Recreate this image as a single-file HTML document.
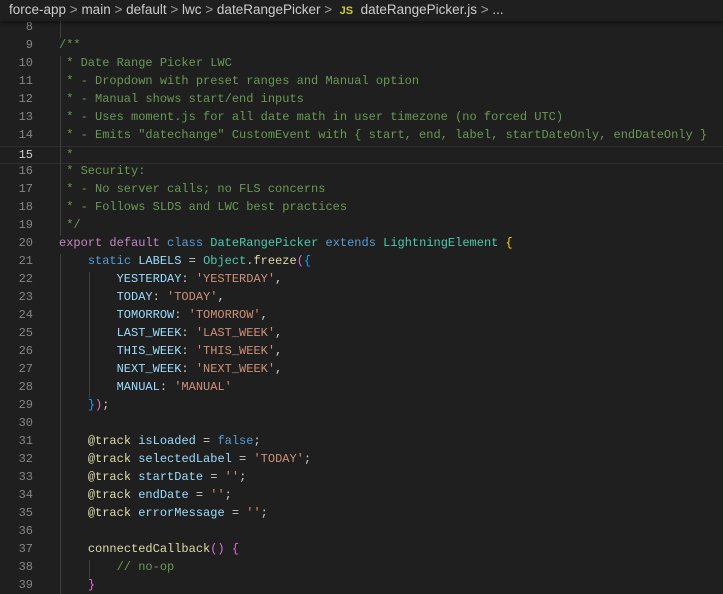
<!DOCTYPE html>
<html><head><meta charset="utf-8"><style>
html,body{margin:0;padding:0;background:#1f1f1f;width:723px;height:594px;overflow:hidden}
#bc{position:absolute;left:0;top:0;width:714px;height:21px;background:#1f1f1f;font:13.5px "Liberation Sans",sans-serif;color:#cccccc;line-height:20px;white-space:pre;padding-left:9px;box-shadow:0 2px 4px rgba(0,0,0,.45);z-index:2}
.sep{color:#a0a0a0}
.js{color:#cbcb41;font-weight:bold;font-size:11px}
#ed{position:absolute;left:0;top:3px;width:723px;height:591px;overflow:hidden}
.row{position:absolute;left:0;width:723px;height:18px;line-height:18px;font:12px "Liberation Mono",monospace;white-space:pre}
.ln{position:absolute;left:0;width:33px;text-align:right;color:#858585}
.cd{position:absolute;left:59px;color:#cccccc}
.cur{border-top:1px solid #303030;border-bottom:1px solid #303030;height:16px;line-height:16px}
.cur .ln{color:#cccccc}
.g{position:absolute;width:1px;background:#404040}
.c{color:#6a9955}.k{color:#c586c0}.b{color:#569cd6}.t{color:#4ec9b0}.v{color:#9cdcfe}.s{color:#ce9178}.f{color:#dcdcaa}.y{color:#ffd700}.p{color:#da70d6}.bl{color:#179fff}.w{color:#cccccc}
</style></head><body>
<div id="bc">force-app <span class="sep">&gt;</span> main <span class="sep">&gt;</span> default <span class="sep">&gt;</span> lwc <span class="sep">&gt;</span> dateRangePicker <span class="sep">&gt;</span>  <span class="js">JS</span>  dateRangePicker.js <span class="sep">&gt;</span> ...</div>
<div id="ed">
<div class="g" style="left:60px;top:17px;height:18px"></div>
<div class="g" style="left:60px;top:53px;height:180px"></div>
<div class="g" style="left:60px;top:251px;height:343px"></div>
<div class="g" style="left:89px;top:269px;height:126px"></div>
<div class="g" style="left:89px;top:557px;height:18px"></div>

<div class="row" style="top:17px"><span class="ln">8</span></div>
<div class="row" style="top:35px"><span class="ln">9</span><span class="cd c">/**</span></div>
<div class="row" style="top:53px"><span class="ln">10</span><span class="cd c"> * Date Range Picker LWC</span></div>
<div class="row" style="top:71px"><span class="ln">11</span><span class="cd c"> * - Dropdown with preset ranges and Manual option</span></div>
<div class="row" style="top:89px"><span class="ln">12</span><span class="cd c"> * - Manual shows start/end inputs</span></div>
<div class="row" style="top:107px"><span class="ln">13</span><span class="cd c"> * - Uses moment.js for all date math in user timezone (no forced UTC)</span></div>
<div class="row" style="top:125px"><span class="ln">14</span><span class="cd c"> * - Emits "datechange" CustomEvent with { start, end, label, startDateOnly, endDateOnly }</span></div>
<div class="row cur" style="top:143px"><span class="ln">15</span><span class="cd c"> *</span></div>
<div class="row" style="top:161px"><span class="ln">16</span><span class="cd c"> * Security:</span></div>
<div class="row" style="top:179px"><span class="ln">17</span><span class="cd c"> * - No server calls; no FLS concerns</span></div>
<div class="row" style="top:197px"><span class="ln">18</span><span class="cd c"> * - Follows SLDS and LWC best practices</span></div>
<div class="row" style="top:215px"><span class="ln">19</span><span class="cd c"> */</span></div>
<div class="row" style="top:233px"><span class="ln">20</span><span class="cd"><span class="k">export</span> <span class="k">default</span> <span class="b">class</span> <span class="t">DateRangePicker</span> <span class="b">extends</span> <span class="t">LightningElement</span> <span class="y">{</span></span></div>
<div class="row" style="top:251px"><span class="ln">21</span><span class="cd">    <span class="b">static</span> <span class="v">LABELS</span> = <span class="t">Object</span>.<span class="f">freeze</span><span class="p">(</span><span class="bl">{</span></span></div>
<div class="row" style="top:269px"><span class="ln">22</span><span class="cd">        <span class="v">YESTERDAY</span>: <span class="s">'YESTERDAY'</span>,</span></div>
<div class="row" style="top:287px"><span class="ln">23</span><span class="cd">        <span class="v">TODAY</span>: <span class="s">'TODAY'</span>,</span></div>
<div class="row" style="top:305px"><span class="ln">24</span><span class="cd">        <span class="v">TOMORROW</span>: <span class="s">'TOMORROW'</span>,</span></div>
<div class="row" style="top:323px"><span class="ln">25</span><span class="cd">        <span class="v">LAST_WEEK</span>: <span class="s">'LAST_WEEK'</span>,</span></div>
<div class="row" style="top:341px"><span class="ln">26</span><span class="cd">        <span class="v">THIS_WEEK</span>: <span class="s">'THIS_WEEK'</span>,</span></div>
<div class="row" style="top:359px"><span class="ln">27</span><span class="cd">        <span class="v">NEXT_WEEK</span>: <span class="s">'NEXT_WEEK'</span>,</span></div>
<div class="row" style="top:377px"><span class="ln">28</span><span class="cd">        <span class="v">MANUAL</span>: <span class="s">'MANUAL'</span></span></div>
<div class="row" style="top:395px"><span class="ln">29</span><span class="cd">    <span class="bl">}</span><span class="p">)</span>;</span></div>
<div class="row" style="top:413px"><span class="ln">30</span></div>
<div class="row" style="top:431px"><span class="ln">31</span><span class="cd">    <span class="f">@track</span> <span class="v">isLoaded</span> = <span class="b">false</span>;</span></div>
<div class="row" style="top:449px"><span class="ln">32</span><span class="cd">    <span class="f">@track</span> <span class="v">selectedLabel</span> = <span class="s">'TODAY'</span>;</span></div>
<div class="row" style="top:467px"><span class="ln">33</span><span class="cd">    <span class="f">@track</span> <span class="v">startDate</span> = <span class="s">''</span>;</span></div>
<div class="row" style="top:485px"><span class="ln">34</span><span class="cd">    <span class="f">@track</span> <span class="v">endDate</span> = <span class="s">''</span>;</span></div>
<div class="row" style="top:503px"><span class="ln">35</span><span class="cd">    <span class="f">@track</span> <span class="v">errorMessage</span> = <span class="s">''</span>;</span></div>
<div class="row" style="top:521px"><span class="ln">36</span></div>
<div class="row" style="top:539px"><span class="ln">37</span><span class="cd">    <span class="f">connectedCallback</span><span class="p">()</span> <span class="p">{</span></span></div>
<div class="row" style="top:557px"><span class="ln">38</span><span class="cd">        <span class="c">// no-op</span></span></div>
<div class="row" style="top:575px"><span class="ln">39</span><span class="cd">    <span class="p">}</span></span></div>
</div>
</body></html>
